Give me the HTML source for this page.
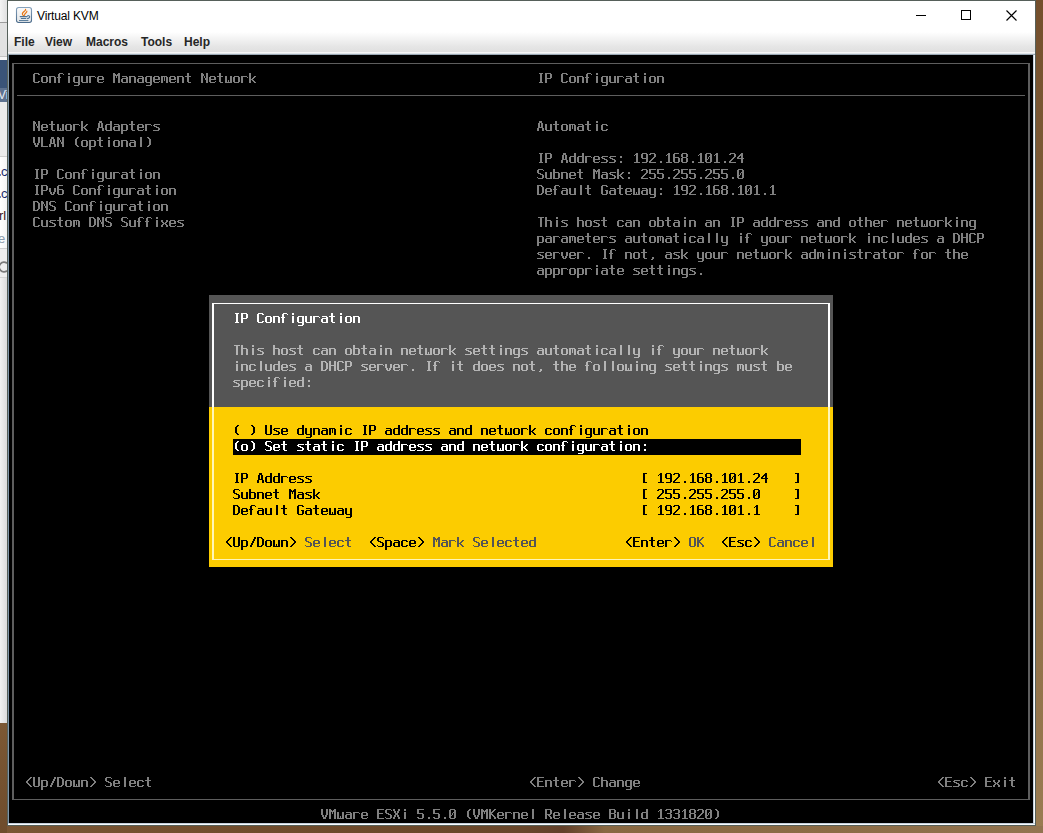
<!DOCTYPE html>
<html><head><meta charset="utf-8">
<style>
html,body{margin:0;padding:0;}
body{width:1043px;height:833px;overflow:hidden;position:relative;background:linear-gradient(90deg,#7a5430 0%,#86603a 50%,#92704a 100%);font-family:"Liberation Sans",sans-serif;}
.abs{position:absolute;}
#strip{left:0;top:0;width:7px;height:723px;background:linear-gradient(90deg,#f2f2f2,#dcdcdc);overflow:hidden;}
#win{left:7px;top:0;width:1029px;height:826px;background:#56605a;}
#title{left:8px;top:1px;width:1027px;height:29px;background:#ffffff;}
#menubar{left:8px;top:30px;width:1027px;height:25px;background:linear-gradient(#ffffff 0%,#ffffff 8%,#f3f3f3 35%,#e6e6e6 65%,#dfdfdf 90%,#dfdfdf 100%);}
#frameR{left:1033px;top:55px;width:2px;height:770px;background:linear-gradient(90deg,#c4d0dc 50%,#f8fbfd 50%);}
#frameB{left:8px;top:823px;width:1027px;height:2px;background:linear-gradient(#c4d0dc 50%,#f8fbfd 50%);}
#frameL{left:8px;top:55px;width:1px;height:770px;background:#8096a8;}
.mt{position:absolute;top:35px;font:bold 12px "Liberation Sans",sans-serif;color:#262626;line-height:14px;}
#ttl{position:absolute;left:37px;top:9px;font:12px "Liberation Sans",sans-serif;color:#000;line-height:14px;letter-spacing:-0.15px;}
</style></head><body>
<div class="abs" style="left:1036px;top:0;width:7px;height:833px;background:linear-gradient(#744f2c 0%,#80603a 30%,#8a6a42 60%,#9a7c52 100%)"></div>
<div class="abs" style="left:0;top:826px;width:1043px;height:7px;background:linear-gradient(90deg,#7a5634 0%,#704c2c 25%,#68462a 50%,#62402a 54%,#886842 58%,#8c6c46 80%,#927450 100%)"></div>
<div class="abs" style="left:0;top:723px;width:7px;height:110px;background:linear-gradient(#7c5834,#6e4c2c)"></div>
<div id="strip" class="abs">
  <div class="abs" style="left:0;top:0;width:7px;height:22px;background:linear-gradient(90deg,#f4f4f4,#e0e0e0)"></div>
  <div class="abs" style="left:0;top:22px;width:7px;height:1px;background:#9c9c9c"></div>
  <div class="abs" style="left:0;top:23px;width:7px;height:34px;background:#e2e2e2"></div>
  <div class="abs" style="left:0;top:56px;width:7px;height:1px;background:#c4c4c4"></div><div class="abs" style="left:0;top:57px;width:7px;height:3px;background:#f6f6f6"></div>
  <div class="abs" style="left:0;top:60px;width:7px;height:28px;background:#3a5478"></div>
  <div class="abs" style="left:0;top:88px;width:7px;height:14px;background:#5d7290"></div>
  <div class="abs" style="left:-2px;top:88px;font:12px 'Liberation Sans';color:#e8eef4;line-height:14px">Vi</div>
  <div class="abs" style="left:0;top:102px;width:7px;height:54px;background:#ebebeb"></div>
  <div class="abs" style="left:0;top:156px;width:7px;height:1px;background:#cfcfcf"></div>
  <div class="abs" style="left:0;top:157px;width:7px;height:91px;background:linear-gradient(90deg,#ffffff,#f4f4f4)"></div>
  <div class="abs" style="left:0px;top:174px;width:1px;height:2px;background:#6a8ac0"></div><div class="abs" style="left:1px;top:165px;font:13px 'Liberation Sans';color:#1c2a6a;line-height:14px">c</div>
  <div class="abs" style="left:0px;top:196px;width:1px;height:2px;background:#6a8ac0"></div><div class="abs" style="left:1px;top:187px;font:13px 'Liberation Sans';color:#1c2a6a;line-height:14px">c</div>
  <div class="abs" style="left:-1px;top:209px;font:13px 'Liberation Sans';color:#3a1420;line-height:14px">rl</div>
  <div class="abs" style="left:-2px;top:232px;font:13px 'Liberation Sans';color:#8a9aaa;line-height:14px">e</div>
  <div class="abs" style="left:0;top:248px;width:7px;height:1px;background:#d0d0d0"></div>
  <div class="abs" style="left:0;top:249px;width:7px;height:28px;background:#eeeeee"></div>
  <svg class="abs" style="left:0;top:259px" width="7" height="16" viewBox="0 0 7 16"><path d="M7 4.2A4.8 4.8 0 1 0 7 11.8" fill="none" stroke="#7a7a7a" stroke-width="1.8"/></svg>
  <div class="abs" style="left:0;top:277px;width:7px;height:1px;background:#d4d4d4"></div>
</div>
<div id="win" class="abs"></div>
<div id="title" class="abs"></div>
<svg class="abs" style="left:15px;top:6px" width="18" height="18" viewBox="0 0 18 18">
  <defs><linearGradient id="jg" x1="0" y1="0" x2="0" y2="1"><stop offset="0" stop-color="#fafafa"/><stop offset="1" stop-color="#e4e6e8"/></linearGradient>
  <linearGradient id="jb" x1="0" y1="0" x2="0" y2="1"><stop offset="0" stop-color="#86a2bc"/><stop offset="1" stop-color="#4a6a8a"/></linearGradient></defs>
  <rect x="1.5" y="1.5" width="15" height="15" rx="2.2" ry="2.2" fill="url(#jg)" stroke="url(#jb)" stroke-width="1.1"/>
  <path d="M8.6 9.8C7.2 8.6 6.9 7.4 8.2 6.2C9.3 5.2 10.6 4.6 10.6 3.4" fill="none" stroke="#e8740e" stroke-width="1.2" stroke-linecap="round"/>
  <path d="M9.6 9.4C9.2 8.4 9.9 7.7 10.8 7C11.6 6.4 12 5.8 11.9 5" fill="none" stroke="#e8740e" stroke-width="1.1" stroke-linecap="round"/>
  <path d="M5.2 10.6H12.2" stroke="#4f7494" stroke-width="1.1" stroke-linecap="round"/>
  <path d="M6.3 12.5H10.8" stroke="#4f7494" stroke-width="1.1" stroke-linecap="round"/>
  <path d="M4.4 14.6H13" stroke="#4f7494" stroke-width="1" stroke-linecap="round"/>
  <path d="M12.4 9.6C14.4 9.4 14.9 10.4 14.6 11.2C14.3 12 13.4 12.6 11.9 12.7" fill="none" stroke="#4f7494" stroke-width="1.1"/>
</svg>
<div id="ttl">Virtual KVM</div>
<svg class="abs" style="left:910px;top:4px" width="120" height="22" viewBox="0 0 120 22" shape-rendering="crispEdges">
  <rect x="6" y="11" width="10" height="1" fill="#000"/>
  <rect x="51.5" y="6.5" width="9" height="9" fill="none" stroke="#000" stroke-width="1"/>
  <path d="M96.5 6.5L106.5 16.5M106.5 6.5L96.5 16.5" stroke="#000" stroke-width="1.15" shape-rendering="auto"/>
</svg>
<div id="menubar" class="abs"></div>
<div class="abs" style="left:8px;top:52px;width:1027px;height:1px;background:#f6f6f6"></div>
<div class="abs" style="left:8px;top:53px;width:1027px;height:1px;background:#dfe4e8"></div>
<div class="abs" style="left:8px;top:54px;width:1027px;height:1px;background:#9aa8b4"></div>
<div class="mt" style="left:14px">File</div>
<div class="mt" style="left:45px">View</div>
<div class="mt" style="left:86px">Macros</div>
<div class="mt" style="left:141px">Tools</div>
<div class="mt" style="left:184px">Help</div>
<div id="frameL" class="abs"></div>
<div id="frameR" class="abs"></div>
<div id="frameB" class="abs"></div>
<svg width="1024" height="768" viewBox="0 0 1024 768" shape-rendering="crispEdges" style="position:absolute;left:9px;top:55px"><defs><path id="g40" d="M4 2h2v1h-2zM4 11h2v1h-2zM3 3h2v1h-2zM3 10h2v1h-2zM2 4h2v6h-2z"/><path id="g41" d="M2 2h2v1h-2zM2 11h2v1h-2zM3 3h2v1h-2zM3 10h2v1h-2zM4 4h2v6h-2z"/><path id="g44" d="M3 10h2v2h-2zM2 12h2v1h-2z"/><path id="g46" d="M3 10h2v2h-2z"/><path id="g47" d="M5 2h2v2h-2zM4 4h2v2h-2zM3 6h2v2h-2zM2 8h2v2h-2zM1 10h2v2h-2z"/><path id="g48" d="M1 2h5v1h-5zM1 11h5v1h-5zM0 3h2v5h-2zM0 9h2v2h-2zM5 3h2v2h-2zM5 6h2v5h-2zM4 5h3v1h-3zM3 6h1v2h-1zM0 8h3v1h-3z"/><path id="g49" d="M3 2h2v1h-2zM3 4h2v7h-2zM2 3h3v1h-3zM1 4h1v1h-1zM1 11h6v1h-6z"/><path id="g50" d="M1 2h5v1h-5zM0 3h2v1h-2zM0 10h2v1h-2zM5 3h2v3h-2zM4 6h2v1h-2zM3 7h2v1h-2zM2 8h2v1h-2zM1 9h2v1h-2zM0 11h7v1h-7z"/><path id="g51" d="M1 2h5v1h-5zM1 11h5v1h-5zM0 3h2v1h-2zM0 10h2v1h-2zM5 3h2v3h-2zM5 7h2v4h-2zM2 6h4v1h-4z"/><path id="g52" d="M4 2h2v1h-2zM4 5h2v2h-2zM4 8h2v4h-2zM3 3h3v1h-3zM2 4h4v1h-4zM1 5h2v1h-2zM0 6h2v1h-2zM0 7h7v1h-7z"/><path id="g53" d="M0 2h7v1h-7zM0 3h2v3h-2zM0 10h2v1h-2zM0 6h6v1h-6zM5 7h2v4h-2zM1 11h5v1h-5z"/><path id="g54" d="M1 2h5v1h-5zM1 11h5v1h-5zM0 3h2v3h-2zM0 7h2v4h-2zM0 6h6v1h-6zM5 7h2v4h-2z"/><path id="g56" d="M1 2h5v1h-5zM1 6h5v1h-5zM1 11h5v1h-5zM0 3h2v3h-2zM0 7h2v4h-2zM5 3h2v3h-2zM5 7h2v4h-2z"/><path id="g57" d="M1 2h5v1h-5zM1 11h5v1h-5zM0 3h2v4h-2zM5 3h2v4h-2zM5 8h2v3h-2zM1 7h6v1h-6z"/><path id="g58" d="M3 5h2v2h-2zM3 10h2v2h-2z"/><path id="g60" d="M5 2h2v1h-2zM5 11h2v1h-2zM4 3h2v1h-2zM4 10h2v1h-2zM3 4h2v1h-2zM3 9h2v1h-2zM2 5h2v1h-2zM2 8h2v1h-2zM1 6h2v2h-2z"/><path id="g62" d="M1 2h2v1h-2zM1 11h2v1h-2zM2 3h2v1h-2zM2 10h2v1h-2zM3 4h2v1h-2zM3 9h2v1h-2zM4 5h2v1h-2zM4 8h2v1h-2zM5 6h2v2h-2z"/><path id="g65" d="M2 2h3v2h-3zM1 4h2v4h-2zM4 4h2v4h-2zM1 8h5v1h-5zM0 9h2v3h-2zM5 9h2v3h-2z"/><path id="g66" d="M0 2h6v1h-6zM0 6h6v1h-6zM0 11h6v1h-6zM0 3h2v3h-2zM0 7h2v4h-2zM5 3h2v3h-2zM5 7h2v4h-2z"/><path id="g67" d="M1 2h5v1h-5zM1 11h5v1h-5zM0 3h2v8h-2zM5 3h2v1h-2zM5 10h2v1h-2z"/><path id="g68" d="M0 2h5v1h-5zM0 11h5v1h-5zM0 3h2v8h-2zM4 3h2v1h-2zM4 10h2v1h-2zM5 4h2v6h-2z"/><path id="g69" d="M0 2h7v1h-7zM0 11h7v1h-7zM0 3h2v3h-2zM0 7h2v4h-2zM0 6h6v1h-6z"/><path id="g71" d="M1 2h5v1h-5zM1 11h5v1h-5zM0 3h2v8h-2zM5 3h2v1h-2zM5 8h2v3h-2zM4 7h3v1h-3z"/><path id="g72" d="M0 2h2v4h-2zM0 7h2v5h-2zM5 2h2v4h-2zM5 7h2v5h-2zM0 6h7v1h-7z"/><path id="g73" d="M2 2h4v1h-4zM2 11h4v1h-4zM3 3h2v8h-2z"/><path id="g75" d="M0 2h2v3h-2zM0 8h2v4h-2zM5 2h2v1h-2zM5 10h2v2h-2zM4 3h2v1h-2zM4 9h2v1h-2zM3 4h2v1h-2zM3 8h2v1h-2zM0 5h4v1h-4zM0 7h4v1h-4zM0 6h3v1h-3z"/><path id="g76" d="M0 2h2v9h-2zM0 11h7v1h-7z"/><path id="g77" d="M0 2h2v1h-2zM0 5h2v7h-2zM5 2h2v1h-2zM5 5h2v7h-2zM0 3h3v1h-3zM4 3h3v1h-3zM0 4h7v1h-7zM3 5h1v2h-1z"/><path id="g78" d="M0 2h2v1h-2zM0 5h2v7h-2zM5 2h2v5h-2zM5 9h2v3h-2zM0 3h3v2h-3zM3 5h1v2h-1zM4 7h3v2h-3z"/><path id="g79" d="M1 2h5v1h-5zM1 11h5v1h-5zM0 3h2v8h-2zM5 3h2v8h-2z"/><path id="g80" d="M0 2h6v1h-6zM0 7h6v1h-6zM0 3h2v4h-2zM0 8h2v4h-2zM5 3h2v4h-2z"/><path id="g82" d="M0 2h6v1h-6zM0 7h6v1h-6zM0 3h2v4h-2zM0 8h2v4h-2zM5 3h2v4h-2zM5 10h2v2h-2zM3 8h2v1h-2zM4 9h2v1h-2z"/><path id="g83" d="M1 2h5v1h-5zM1 11h5v1h-5zM0 3h2v3h-2zM6 3h1v1h-1zM1 6h3v1h-3zM3 7h3v1h-3zM5 8h2v3h-2zM0 10h1v1h-1z"/><path id="g84" d="M1 2h6v1h-6zM3 3h2v9h-2z"/><path id="g85" d="M0 2h2v9h-2zM5 2h2v9h-2zM1 11h5v1h-5z"/><path id="g86" d="M0 2h2v6h-2zM5 2h2v6h-2zM1 8h2v2h-2zM4 8h2v2h-2zM2 10h3v2h-3z"/><path id="g88" d="M0 2h2v2h-2zM0 10h2v2h-2zM5 2h2v2h-2zM5 10h2v2h-2zM1 4h2v2h-2zM1 8h2v2h-2zM4 4h2v2h-2zM4 8h2v2h-2zM2 6h3v2h-3z"/><path id="g91" d="M2 2h4v1h-4zM2 11h4v1h-4zM2 3h2v8h-2z"/><path id="g93" d="M2 2h4v1h-4zM2 11h4v1h-4zM4 3h2v8h-2z"/><path id="g97" d="M1 5h5v1h-5zM5 6h2v1h-2zM5 8h2v3h-2zM1 7h6v1h-6zM1 11h6v1h-6zM0 8h2v3h-2z"/><path id="g98" d="M0 2h2v3h-2zM0 6h2v5h-2zM0 5h6v1h-6zM0 11h6v1h-6zM5 6h2v5h-2z"/><path id="g99" d="M1 5h5v1h-5zM1 11h5v1h-5zM0 6h2v5h-2zM5 6h2v1h-2zM5 10h2v1h-2z"/><path id="g100" d="M5 2h2v3h-2zM5 6h2v5h-2zM1 5h6v1h-6zM1 11h6v1h-6zM0 6h2v5h-2z"/><path id="g101" d="M1 5h5v1h-5zM1 11h5v1h-5zM0 6h2v2h-2zM0 9h2v2h-2zM5 6h2v2h-2zM0 8h7v1h-7zM6 10h1v1h-1z"/><path id="g102" d="M2 2h4v1h-4zM1 3h2v3h-2zM1 7h2v5h-2zM6 3h1v1h-1zM0 6h4v1h-4z"/><path id="g103" d="M1 5h6v1h-6zM1 11h6v1h-6zM0 6h2v5h-2zM5 6h2v5h-2zM5 12h2v2h-2zM1 14h5v1h-5z"/><path id="g104" d="M0 2h2v3h-2zM0 6h2v6h-2zM0 5h6v1h-6zM5 6h2v6h-2z"/><path id="g105" d="M3 2h2v2h-2zM3 5h2v7h-2z"/><path id="g107" d="M0 2h2v6h-2zM0 9h2v3h-2zM5 5h2v1h-2zM5 11h2v1h-2zM4 6h2v1h-2zM4 10h2v1h-2zM3 7h2v1h-2zM3 9h2v1h-2zM0 8h4v1h-4z"/><path id="g108" d="M3 2h2v10h-2z"/><path id="g109" d="M0 5h6v1h-6zM0 6h2v6h-2zM3 6h1v4h-1zM5 6h2v6h-2z"/><path id="g110" d="M0 5h6v1h-6zM0 6h2v6h-2zM5 6h2v6h-2z"/><path id="g111" d="M1 5h5v1h-5zM1 11h5v1h-5zM0 6h2v5h-2zM5 6h2v5h-2z"/><path id="g112" d="M0 5h6v1h-6zM0 11h6v1h-6zM0 6h2v5h-2zM0 12h2v3h-2zM5 6h2v5h-2z"/><path id="g114" d="M0 5h6v1h-6zM0 6h2v6h-2zM6 6h1v1h-1z"/><path id="g115" d="M1 5h6v1h-6zM0 6h2v1h-2zM1 7h3v1h-3zM3 8h3v1h-3zM5 9h2v2h-2zM0 11h6v1h-6z"/><path id="g116" d="M2 2h2v3h-2zM2 6h2v5h-2zM0 5h6v1h-6zM3 11h3v1h-3z"/><path id="g117" d="M0 5h2v6h-2zM5 5h2v6h-2zM1 11h6v1h-6z"/><path id="g118" d="M0 5h2v4h-2zM5 5h2v4h-2zM1 9h2v2h-2zM4 9h2v2h-2zM2 11h3v1h-3z"/><path id="g119" d="M0 5h2v6h-2zM5 5h2v6h-2zM3 9h1v2h-1zM0 11h7v1h-7z"/><path id="g120" d="M0 5h2v2h-2zM0 10h2v2h-2zM5 5h2v2h-2zM5 10h2v2h-2zM1 7h2v1h-2zM1 9h2v1h-2zM4 7h2v1h-2zM4 9h2v1h-2zM2 8h3v1h-3z"/><path id="g121" d="M0 5h2v6h-2zM5 5h2v6h-2zM5 12h2v2h-2zM1 11h6v1h-6zM1 14h5v1h-5z"/></defs><rect width="1024" height="768" fill="#000"/><g fill="#5e5e5e"><rect x="3" y="8" width="1018" height="1"/><rect x="3" y="744" width="1018" height="1"/><rect x="3" y="8" width="2" height="737"/><rect x="1019" y="8" width="2" height="737"/><rect x="8" y="40" width="1008" height="1"/></g><rect x="200" y="240" width="624" height="112" fill="#555555"/><rect x="200" y="352" width="624" height="160" fill="#fccc00"/><g fill="#ffffff"><rect x="203" y="248" width="618" height="1"/><rect x="203" y="248" width="2" height="104"/><rect x="819" y="248" width="2" height="104"/></g><g fill="#fff6b8"><rect x="203" y="504" width="618" height="1"/><rect x="203" y="352" width="2" height="153"/><rect x="819" y="352" width="2" height="153"/></g><rect x="224" y="384" width="568" height="16" fill="#000"/><g fill="#808080" transform="translate(24 16)"><use href="#g67" x="0"/><use href="#g111" x="8"/><use href="#g110" x="16"/><use href="#g102" x="24"/><use href="#g105" x="32"/><use href="#g103" x="40"/><use href="#g117" x="48"/><use href="#g114" x="56"/><use href="#g101" x="64"/><use href="#g77" x="80"/><use href="#g97" x="88"/><use href="#g110" x="96"/><use href="#g97" x="104"/><use href="#g103" x="112"/><use href="#g101" x="120"/><use href="#g109" x="128"/><use href="#g101" x="136"/><use href="#g110" x="144"/><use href="#g116" x="152"/><use href="#g78" x="168"/><use href="#g101" x="176"/><use href="#g116" x="184"/><use href="#g119" x="192"/><use href="#g111" x="200"/><use href="#g114" x="208"/><use href="#g107" x="216"/></g><g fill="#808080" transform="translate(528 16)"><use href="#g73" x="0"/><use href="#g80" x="8"/><use href="#g67" x="24"/><use href="#g111" x="32"/><use href="#g110" x="40"/><use href="#g102" x="48"/><use href="#g105" x="56"/><use href="#g103" x="64"/><use href="#g117" x="72"/><use href="#g114" x="80"/><use href="#g97" x="88"/><use href="#g116" x="96"/><use href="#g105" x="104"/><use href="#g111" x="112"/><use href="#g110" x="120"/></g><g fill="#808080" transform="translate(24 64)"><use href="#g78" x="0"/><use href="#g101" x="8"/><use href="#g116" x="16"/><use href="#g119" x="24"/><use href="#g111" x="32"/><use href="#g114" x="40"/><use href="#g107" x="48"/><use href="#g65" x="64"/><use href="#g100" x="72"/><use href="#g97" x="80"/><use href="#g112" x="88"/><use href="#g116" x="96"/><use href="#g101" x="104"/><use href="#g114" x="112"/><use href="#g115" x="120"/></g><g fill="#808080" transform="translate(24 80)"><use href="#g86" x="0"/><use href="#g76" x="8"/><use href="#g65" x="16"/><use href="#g78" x="24"/><use href="#g40" x="40"/><use href="#g111" x="48"/><use href="#g112" x="56"/><use href="#g116" x="64"/><use href="#g105" x="72"/><use href="#g111" x="80"/><use href="#g110" x="88"/><use href="#g97" x="96"/><use href="#g108" x="104"/><use href="#g41" x="112"/></g><g fill="#808080" transform="translate(24 112)"><use href="#g73" x="0"/><use href="#g80" x="8"/><use href="#g67" x="24"/><use href="#g111" x="32"/><use href="#g110" x="40"/><use href="#g102" x="48"/><use href="#g105" x="56"/><use href="#g103" x="64"/><use href="#g117" x="72"/><use href="#g114" x="80"/><use href="#g97" x="88"/><use href="#g116" x="96"/><use href="#g105" x="104"/><use href="#g111" x="112"/><use href="#g110" x="120"/></g><g fill="#808080" transform="translate(24 128)"><use href="#g73" x="0"/><use href="#g80" x="8"/><use href="#g118" x="16"/><use href="#g54" x="24"/><use href="#g67" x="40"/><use href="#g111" x="48"/><use href="#g110" x="56"/><use href="#g102" x="64"/><use href="#g105" x="72"/><use href="#g103" x="80"/><use href="#g117" x="88"/><use href="#g114" x="96"/><use href="#g97" x="104"/><use href="#g116" x="112"/><use href="#g105" x="120"/><use href="#g111" x="128"/><use href="#g110" x="136"/></g><g fill="#808080" transform="translate(24 144)"><use href="#g68" x="0"/><use href="#g78" x="8"/><use href="#g83" x="16"/><use href="#g67" x="32"/><use href="#g111" x="40"/><use href="#g110" x="48"/><use href="#g102" x="56"/><use href="#g105" x="64"/><use href="#g103" x="72"/><use href="#g117" x="80"/><use href="#g114" x="88"/><use href="#g97" x="96"/><use href="#g116" x="104"/><use href="#g105" x="112"/><use href="#g111" x="120"/><use href="#g110" x="128"/></g><g fill="#808080" transform="translate(24 160)"><use href="#g67" x="0"/><use href="#g117" x="8"/><use href="#g115" x="16"/><use href="#g116" x="24"/><use href="#g111" x="32"/><use href="#g109" x="40"/><use href="#g68" x="56"/><use href="#g78" x="64"/><use href="#g83" x="72"/><use href="#g83" x="88"/><use href="#g117" x="96"/><use href="#g102" x="104"/><use href="#g102" x="112"/><use href="#g105" x="120"/><use href="#g120" x="128"/><use href="#g101" x="136"/><use href="#g115" x="144"/></g><g fill="#808080" transform="translate(528 64)"><use href="#g65" x="0"/><use href="#g117" x="8"/><use href="#g116" x="16"/><use href="#g111" x="24"/><use href="#g109" x="32"/><use href="#g97" x="40"/><use href="#g116" x="48"/><use href="#g105" x="56"/><use href="#g99" x="64"/></g><g fill="#808080" transform="translate(528 96)"><use href="#g73" x="0"/><use href="#g80" x="8"/><use href="#g65" x="24"/><use href="#g100" x="32"/><use href="#g100" x="40"/><use href="#g114" x="48"/><use href="#g101" x="56"/><use href="#g115" x="64"/><use href="#g115" x="72"/><use href="#g58" x="80"/><use href="#g49" x="96"/><use href="#g57" x="104"/><use href="#g50" x="112"/><use href="#g46" x="120"/><use href="#g49" x="128"/><use href="#g54" x="136"/><use href="#g56" x="144"/><use href="#g46" x="152"/><use href="#g49" x="160"/><use href="#g48" x="168"/><use href="#g49" x="176"/><use href="#g46" x="184"/><use href="#g50" x="192"/><use href="#g52" x="200"/></g><g fill="#808080" transform="translate(528 112)"><use href="#g83" x="0"/><use href="#g117" x="8"/><use href="#g98" x="16"/><use href="#g110" x="24"/><use href="#g101" x="32"/><use href="#g116" x="40"/><use href="#g77" x="56"/><use href="#g97" x="64"/><use href="#g115" x="72"/><use href="#g107" x="80"/><use href="#g58" x="88"/><use href="#g50" x="104"/><use href="#g53" x="112"/><use href="#g53" x="120"/><use href="#g46" x="128"/><use href="#g50" x="136"/><use href="#g53" x="144"/><use href="#g53" x="152"/><use href="#g46" x="160"/><use href="#g50" x="168"/><use href="#g53" x="176"/><use href="#g53" x="184"/><use href="#g46" x="192"/><use href="#g48" x="200"/></g><g fill="#808080" transform="translate(528 128)"><use href="#g68" x="0"/><use href="#g101" x="8"/><use href="#g102" x="16"/><use href="#g97" x="24"/><use href="#g117" x="32"/><use href="#g108" x="40"/><use href="#g116" x="48"/><use href="#g71" x="64"/><use href="#g97" x="72"/><use href="#g116" x="80"/><use href="#g101" x="88"/><use href="#g119" x="96"/><use href="#g97" x="104"/><use href="#g121" x="112"/><use href="#g58" x="120"/><use href="#g49" x="136"/><use href="#g57" x="144"/><use href="#g50" x="152"/><use href="#g46" x="160"/><use href="#g49" x="168"/><use href="#g54" x="176"/><use href="#g56" x="184"/><use href="#g46" x="192"/><use href="#g49" x="200"/><use href="#g48" x="208"/><use href="#g49" x="216"/><use href="#g46" x="224"/><use href="#g49" x="232"/></g><g fill="#808080" transform="translate(528 160)"><use href="#g84" x="0"/><use href="#g104" x="8"/><use href="#g105" x="16"/><use href="#g115" x="24"/><use href="#g104" x="40"/><use href="#g111" x="48"/><use href="#g115" x="56"/><use href="#g116" x="64"/><use href="#g99" x="80"/><use href="#g97" x="88"/><use href="#g110" x="96"/><use href="#g111" x="112"/><use href="#g98" x="120"/><use href="#g116" x="128"/><use href="#g97" x="136"/><use href="#g105" x="144"/><use href="#g110" x="152"/><use href="#g97" x="168"/><use href="#g110" x="176"/><use href="#g73" x="192"/><use href="#g80" x="200"/><use href="#g97" x="216"/><use href="#g100" x="224"/><use href="#g100" x="232"/><use href="#g114" x="240"/><use href="#g101" x="248"/><use href="#g115" x="256"/><use href="#g115" x="264"/><use href="#g97" x="280"/><use href="#g110" x="288"/><use href="#g100" x="296"/><use href="#g111" x="312"/><use href="#g116" x="320"/><use href="#g104" x="328"/><use href="#g101" x="336"/><use href="#g114" x="344"/><use href="#g110" x="360"/><use href="#g101" x="368"/><use href="#g116" x="376"/><use href="#g119" x="384"/><use href="#g111" x="392"/><use href="#g114" x="400"/><use href="#g107" x="408"/><use href="#g105" x="416"/><use href="#g110" x="424"/><use href="#g103" x="432"/></g><g fill="#808080" transform="translate(528 176)"><use href="#g112" x="0"/><use href="#g97" x="8"/><use href="#g114" x="16"/><use href="#g97" x="24"/><use href="#g109" x="32"/><use href="#g101" x="40"/><use href="#g116" x="48"/><use href="#g101" x="56"/><use href="#g114" x="64"/><use href="#g115" x="72"/><use href="#g97" x="88"/><use href="#g117" x="96"/><use href="#g116" x="104"/><use href="#g111" x="112"/><use href="#g109" x="120"/><use href="#g97" x="128"/><use href="#g116" x="136"/><use href="#g105" x="144"/><use href="#g99" x="152"/><use href="#g97" x="160"/><use href="#g108" x="168"/><use href="#g108" x="176"/><use href="#g121" x="184"/><use href="#g105" x="200"/><use href="#g102" x="208"/><use href="#g121" x="224"/><use href="#g111" x="232"/><use href="#g117" x="240"/><use href="#g114" x="248"/><use href="#g110" x="264"/><use href="#g101" x="272"/><use href="#g116" x="280"/><use href="#g119" x="288"/><use href="#g111" x="296"/><use href="#g114" x="304"/><use href="#g107" x="312"/><use href="#g105" x="328"/><use href="#g110" x="336"/><use href="#g99" x="344"/><use href="#g108" x="352"/><use href="#g117" x="360"/><use href="#g100" x="368"/><use href="#g101" x="376"/><use href="#g115" x="384"/><use href="#g97" x="400"/><use href="#g68" x="416"/><use href="#g72" x="424"/><use href="#g67" x="432"/><use href="#g80" x="440"/></g><g fill="#808080" transform="translate(528 192)"><use href="#g115" x="0"/><use href="#g101" x="8"/><use href="#g114" x="16"/><use href="#g118" x="24"/><use href="#g101" x="32"/><use href="#g114" x="40"/><use href="#g46" x="48"/><use href="#g73" x="64"/><use href="#g102" x="72"/><use href="#g110" x="88"/><use href="#g111" x="96"/><use href="#g116" x="104"/><use href="#g44" x="112"/><use href="#g97" x="128"/><use href="#g115" x="136"/><use href="#g107" x="144"/><use href="#g121" x="160"/><use href="#g111" x="168"/><use href="#g117" x="176"/><use href="#g114" x="184"/><use href="#g110" x="200"/><use href="#g101" x="208"/><use href="#g116" x="216"/><use href="#g119" x="224"/><use href="#g111" x="232"/><use href="#g114" x="240"/><use href="#g107" x="248"/><use href="#g97" x="264"/><use href="#g100" x="272"/><use href="#g109" x="280"/><use href="#g105" x="288"/><use href="#g110" x="296"/><use href="#g105" x="304"/><use href="#g115" x="312"/><use href="#g116" x="320"/><use href="#g114" x="328"/><use href="#g97" x="336"/><use href="#g116" x="344"/><use href="#g111" x="352"/><use href="#g114" x="360"/><use href="#g102" x="376"/><use href="#g111" x="384"/><use href="#g114" x="392"/><use href="#g116" x="408"/><use href="#g104" x="416"/><use href="#g101" x="424"/></g><g fill="#808080" transform="translate(528 208)"><use href="#g97" x="0"/><use href="#g112" x="8"/><use href="#g112" x="16"/><use href="#g114" x="24"/><use href="#g111" x="32"/><use href="#g112" x="40"/><use href="#g114" x="48"/><use href="#g105" x="56"/><use href="#g97" x="64"/><use href="#g116" x="72"/><use href="#g101" x="80"/><use href="#g115" x="96"/><use href="#g101" x="104"/><use href="#g116" x="112"/><use href="#g116" x="120"/><use href="#g105" x="128"/><use href="#g110" x="136"/><use href="#g103" x="144"/><use href="#g115" x="152"/><use href="#g46" x="160"/></g><g fill="#808080" transform="translate(16 720)"><use href="#g60" x="0"/><use href="#g85" x="8"/><use href="#g112" x="16"/><use href="#g47" x="24"/><use href="#g68" x="32"/><use href="#g111" x="40"/><use href="#g119" x="48"/><use href="#g110" x="56"/><use href="#g62" x="64"/><use href="#g83" x="80"/><use href="#g101" x="88"/><use href="#g108" x="96"/><use href="#g101" x="104"/><use href="#g99" x="112"/><use href="#g116" x="120"/></g><g fill="#808080" transform="translate(520 720)"><use href="#g60" x="0"/><use href="#g69" x="8"/><use href="#g110" x="16"/><use href="#g116" x="24"/><use href="#g101" x="32"/><use href="#g114" x="40"/><use href="#g62" x="48"/><use href="#g67" x="64"/><use href="#g104" x="72"/><use href="#g97" x="80"/><use href="#g110" x="88"/><use href="#g103" x="96"/><use href="#g101" x="104"/></g><g fill="#808080" transform="translate(928 720)"><use href="#g60" x="0"/><use href="#g69" x="8"/><use href="#g115" x="16"/><use href="#g99" x="24"/><use href="#g62" x="32"/><use href="#g69" x="48"/><use href="#g120" x="56"/><use href="#g105" x="64"/><use href="#g116" x="72"/></g><g fill="#808080" transform="translate(312 752)"><use href="#g86" x="0"/><use href="#g77" x="8"/><use href="#g119" x="16"/><use href="#g97" x="24"/><use href="#g114" x="32"/><use href="#g101" x="40"/><use href="#g69" x="56"/><use href="#g83" x="64"/><use href="#g88" x="72"/><use href="#g105" x="80"/><use href="#g53" x="96"/><use href="#g46" x="104"/><use href="#g53" x="112"/><use href="#g46" x="120"/><use href="#g48" x="128"/><use href="#g40" x="144"/><use href="#g86" x="152"/><use href="#g77" x="160"/><use href="#g75" x="168"/><use href="#g101" x="176"/><use href="#g114" x="184"/><use href="#g110" x="192"/><use href="#g101" x="200"/><use href="#g108" x="208"/><use href="#g82" x="224"/><use href="#g101" x="232"/><use href="#g108" x="240"/><use href="#g101" x="248"/><use href="#g97" x="256"/><use href="#g115" x="264"/><use href="#g101" x="272"/><use href="#g66" x="288"/><use href="#g117" x="296"/><use href="#g105" x="304"/><use href="#g108" x="312"/><use href="#g100" x="320"/><use href="#g49" x="336"/><use href="#g51" x="344"/><use href="#g51" x="352"/><use href="#g49" x="360"/><use href="#g56" x="368"/><use href="#g50" x="376"/><use href="#g48" x="384"/><use href="#g41" x="392"/></g><g fill="#ffffff" transform="translate(224 256)"><use href="#g73" x="0"/><use href="#g80" x="8"/><use href="#g67" x="24"/><use href="#g111" x="32"/><use href="#g110" x="40"/><use href="#g102" x="48"/><use href="#g105" x="56"/><use href="#g103" x="64"/><use href="#g117" x="72"/><use href="#g114" x="80"/><use href="#g97" x="88"/><use href="#g116" x="96"/><use href="#g105" x="104"/><use href="#g111" x="112"/><use href="#g110" x="120"/></g><g fill="#b4b4b4" transform="translate(224 288)"><use href="#g84" x="0"/><use href="#g104" x="8"/><use href="#g105" x="16"/><use href="#g115" x="24"/><use href="#g104" x="40"/><use href="#g111" x="48"/><use href="#g115" x="56"/><use href="#g116" x="64"/><use href="#g99" x="80"/><use href="#g97" x="88"/><use href="#g110" x="96"/><use href="#g111" x="112"/><use href="#g98" x="120"/><use href="#g116" x="128"/><use href="#g97" x="136"/><use href="#g105" x="144"/><use href="#g110" x="152"/><use href="#g110" x="168"/><use href="#g101" x="176"/><use href="#g116" x="184"/><use href="#g119" x="192"/><use href="#g111" x="200"/><use href="#g114" x="208"/><use href="#g107" x="216"/><use href="#g115" x="232"/><use href="#g101" x="240"/><use href="#g116" x="248"/><use href="#g116" x="256"/><use href="#g105" x="264"/><use href="#g110" x="272"/><use href="#g103" x="280"/><use href="#g115" x="288"/><use href="#g97" x="304"/><use href="#g117" x="312"/><use href="#g116" x="320"/><use href="#g111" x="328"/><use href="#g109" x="336"/><use href="#g97" x="344"/><use href="#g116" x="352"/><use href="#g105" x="360"/><use href="#g99" x="368"/><use href="#g97" x="376"/><use href="#g108" x="384"/><use href="#g108" x="392"/><use href="#g121" x="400"/><use href="#g105" x="416"/><use href="#g102" x="424"/><use href="#g121" x="440"/><use href="#g111" x="448"/><use href="#g117" x="456"/><use href="#g114" x="464"/><use href="#g110" x="480"/><use href="#g101" x="488"/><use href="#g116" x="496"/><use href="#g119" x="504"/><use href="#g111" x="512"/><use href="#g114" x="520"/><use href="#g107" x="528"/></g><g fill="#b4b4b4" transform="translate(224 304)"><use href="#g105" x="0"/><use href="#g110" x="8"/><use href="#g99" x="16"/><use href="#g108" x="24"/><use href="#g117" x="32"/><use href="#g100" x="40"/><use href="#g101" x="48"/><use href="#g115" x="56"/><use href="#g97" x="72"/><use href="#g68" x="88"/><use href="#g72" x="96"/><use href="#g67" x="104"/><use href="#g80" x="112"/><use href="#g115" x="128"/><use href="#g101" x="136"/><use href="#g114" x="144"/><use href="#g118" x="152"/><use href="#g101" x="160"/><use href="#g114" x="168"/><use href="#g46" x="176"/><use href="#g73" x="192"/><use href="#g102" x="200"/><use href="#g105" x="216"/><use href="#g116" x="224"/><use href="#g100" x="240"/><use href="#g111" x="248"/><use href="#g101" x="256"/><use href="#g115" x="264"/><use href="#g110" x="280"/><use href="#g111" x="288"/><use href="#g116" x="296"/><use href="#g44" x="304"/><use href="#g116" x="320"/><use href="#g104" x="328"/><use href="#g101" x="336"/><use href="#g102" x="352"/><use href="#g111" x="360"/><use href="#g108" x="368"/><use href="#g108" x="376"/><use href="#g111" x="384"/><use href="#g119" x="392"/><use href="#g105" x="400"/><use href="#g110" x="408"/><use href="#g103" x="416"/><use href="#g115" x="432"/><use href="#g101" x="440"/><use href="#g116" x="448"/><use href="#g116" x="456"/><use href="#g105" x="464"/><use href="#g110" x="472"/><use href="#g103" x="480"/><use href="#g115" x="488"/><use href="#g109" x="504"/><use href="#g117" x="512"/><use href="#g115" x="520"/><use href="#g116" x="528"/><use href="#g98" x="544"/><use href="#g101" x="552"/></g><g fill="#b4b4b4" transform="translate(224 320)"><use href="#g115" x="0"/><use href="#g112" x="8"/><use href="#g101" x="16"/><use href="#g99" x="24"/><use href="#g105" x="32"/><use href="#g102" x="40"/><use href="#g105" x="48"/><use href="#g101" x="56"/><use href="#g100" x="64"/><use href="#g58" x="72"/></g><g fill="#000000" transform="translate(224 368)"><use href="#g40" x="0"/><use href="#g41" x="16"/><use href="#g85" x="32"/><use href="#g115" x="40"/><use href="#g101" x="48"/><use href="#g100" x="64"/><use href="#g121" x="72"/><use href="#g110" x="80"/><use href="#g97" x="88"/><use href="#g109" x="96"/><use href="#g105" x="104"/><use href="#g99" x="112"/><use href="#g73" x="128"/><use href="#g80" x="136"/><use href="#g97" x="152"/><use href="#g100" x="160"/><use href="#g100" x="168"/><use href="#g114" x="176"/><use href="#g101" x="184"/><use href="#g115" x="192"/><use href="#g115" x="200"/><use href="#g97" x="216"/><use href="#g110" x="224"/><use href="#g100" x="232"/><use href="#g110" x="248"/><use href="#g101" x="256"/><use href="#g116" x="264"/><use href="#g119" x="272"/><use href="#g111" x="280"/><use href="#g114" x="288"/><use href="#g107" x="296"/><use href="#g99" x="312"/><use href="#g111" x="320"/><use href="#g110" x="328"/><use href="#g102" x="336"/><use href="#g105" x="344"/><use href="#g103" x="352"/><use href="#g117" x="360"/><use href="#g114" x="368"/><use href="#g97" x="376"/><use href="#g116" x="384"/><use href="#g105" x="392"/><use href="#g111" x="400"/><use href="#g110" x="408"/></g><g fill="#ffffff" transform="translate(224 384)"><use href="#g40" x="0"/><use href="#g111" x="8"/><use href="#g41" x="16"/><use href="#g83" x="32"/><use href="#g101" x="40"/><use href="#g116" x="48"/><use href="#g115" x="64"/><use href="#g116" x="72"/><use href="#g97" x="80"/><use href="#g116" x="88"/><use href="#g105" x="96"/><use href="#g99" x="104"/><use href="#g73" x="120"/><use href="#g80" x="128"/><use href="#g97" x="144"/><use href="#g100" x="152"/><use href="#g100" x="160"/><use href="#g114" x="168"/><use href="#g101" x="176"/><use href="#g115" x="184"/><use href="#g115" x="192"/><use href="#g97" x="208"/><use href="#g110" x="216"/><use href="#g100" x="224"/><use href="#g110" x="240"/><use href="#g101" x="248"/><use href="#g116" x="256"/><use href="#g119" x="264"/><use href="#g111" x="272"/><use href="#g114" x="280"/><use href="#g107" x="288"/><use href="#g99" x="304"/><use href="#g111" x="312"/><use href="#g110" x="320"/><use href="#g102" x="328"/><use href="#g105" x="336"/><use href="#g103" x="344"/><use href="#g117" x="352"/><use href="#g114" x="360"/><use href="#g97" x="368"/><use href="#g116" x="376"/><use href="#g105" x="384"/><use href="#g111" x="392"/><use href="#g110" x="400"/><use href="#g58" x="408"/></g><g fill="#000000" transform="translate(224 416)"><use href="#g73" x="0"/><use href="#g80" x="8"/><use href="#g65" x="24"/><use href="#g100" x="32"/><use href="#g100" x="40"/><use href="#g114" x="48"/><use href="#g101" x="56"/><use href="#g115" x="64"/><use href="#g115" x="72"/></g><g fill="#000000" transform="translate(224 432)"><use href="#g83" x="0"/><use href="#g117" x="8"/><use href="#g98" x="16"/><use href="#g110" x="24"/><use href="#g101" x="32"/><use href="#g116" x="40"/><use href="#g77" x="56"/><use href="#g97" x="64"/><use href="#g115" x="72"/><use href="#g107" x="80"/></g><g fill="#000000" transform="translate(224 448)"><use href="#g68" x="0"/><use href="#g101" x="8"/><use href="#g102" x="16"/><use href="#g97" x="24"/><use href="#g117" x="32"/><use href="#g108" x="40"/><use href="#g116" x="48"/><use href="#g71" x="64"/><use href="#g97" x="72"/><use href="#g116" x="80"/><use href="#g101" x="88"/><use href="#g119" x="96"/><use href="#g97" x="104"/><use href="#g121" x="112"/></g><g fill="#000000" transform="translate(632 416)"><use href="#g91" x="0"/><use href="#g49" x="16"/><use href="#g57" x="24"/><use href="#g50" x="32"/><use href="#g46" x="40"/><use href="#g49" x="48"/><use href="#g54" x="56"/><use href="#g56" x="64"/><use href="#g46" x="72"/><use href="#g49" x="80"/><use href="#g48" x="88"/><use href="#g49" x="96"/><use href="#g46" x="104"/><use href="#g50" x="112"/><use href="#g52" x="120"/><use href="#g93" x="152"/></g><g fill="#000000" transform="translate(632 432)"><use href="#g91" x="0"/><use href="#g50" x="16"/><use href="#g53" x="24"/><use href="#g53" x="32"/><use href="#g46" x="40"/><use href="#g50" x="48"/><use href="#g53" x="56"/><use href="#g53" x="64"/><use href="#g46" x="72"/><use href="#g50" x="80"/><use href="#g53" x="88"/><use href="#g53" x="96"/><use href="#g46" x="104"/><use href="#g48" x="112"/><use href="#g93" x="152"/></g><g fill="#000000" transform="translate(632 448)"><use href="#g91" x="0"/><use href="#g49" x="16"/><use href="#g57" x="24"/><use href="#g50" x="32"/><use href="#g46" x="40"/><use href="#g49" x="48"/><use href="#g54" x="56"/><use href="#g56" x="64"/><use href="#g46" x="72"/><use href="#g49" x="80"/><use href="#g48" x="88"/><use href="#g49" x="96"/><use href="#g46" x="104"/><use href="#g49" x="112"/><use href="#g93" x="152"/></g><g fill="#000000" transform="translate(216 480)"><use href="#g60" x="0"/><use href="#g85" x="8"/><use href="#g112" x="16"/><use href="#g47" x="24"/><use href="#g68" x="32"/><use href="#g111" x="40"/><use href="#g119" x="48"/><use href="#g110" x="56"/><use href="#g62" x="64"/></g><g fill="#555555" transform="translate(296 480)"><use href="#g83" x="0"/><use href="#g101" x="8"/><use href="#g108" x="16"/><use href="#g101" x="24"/><use href="#g99" x="32"/><use href="#g116" x="40"/></g><g fill="#000000" transform="translate(360 480)"><use href="#g60" x="0"/><use href="#g83" x="8"/><use href="#g112" x="16"/><use href="#g97" x="24"/><use href="#g99" x="32"/><use href="#g101" x="40"/><use href="#g62" x="48"/></g><g fill="#555555" transform="translate(424 480)"><use href="#g77" x="0"/><use href="#g97" x="8"/><use href="#g114" x="16"/><use href="#g107" x="24"/><use href="#g83" x="40"/><use href="#g101" x="48"/><use href="#g108" x="56"/><use href="#g101" x="64"/><use href="#g99" x="72"/><use href="#g116" x="80"/><use href="#g101" x="88"/><use href="#g100" x="96"/></g><g fill="#000000" transform="translate(616 480)"><use href="#g60" x="0"/><use href="#g69" x="8"/><use href="#g110" x="16"/><use href="#g116" x="24"/><use href="#g101" x="32"/><use href="#g114" x="40"/><use href="#g62" x="48"/></g><g fill="#555555" transform="translate(680 480)"><use href="#g79" x="0"/><use href="#g75" x="8"/></g><g fill="#000000" transform="translate(712 480)"><use href="#g60" x="0"/><use href="#g69" x="8"/><use href="#g115" x="16"/><use href="#g99" x="24"/><use href="#g62" x="32"/></g><g fill="#555555" transform="translate(760 480)"><use href="#g67" x="0"/><use href="#g97" x="8"/><use href="#g110" x="16"/><use href="#g99" x="24"/><use href="#g101" x="32"/><use href="#g108" x="40"/></g></svg>
</body></html>
